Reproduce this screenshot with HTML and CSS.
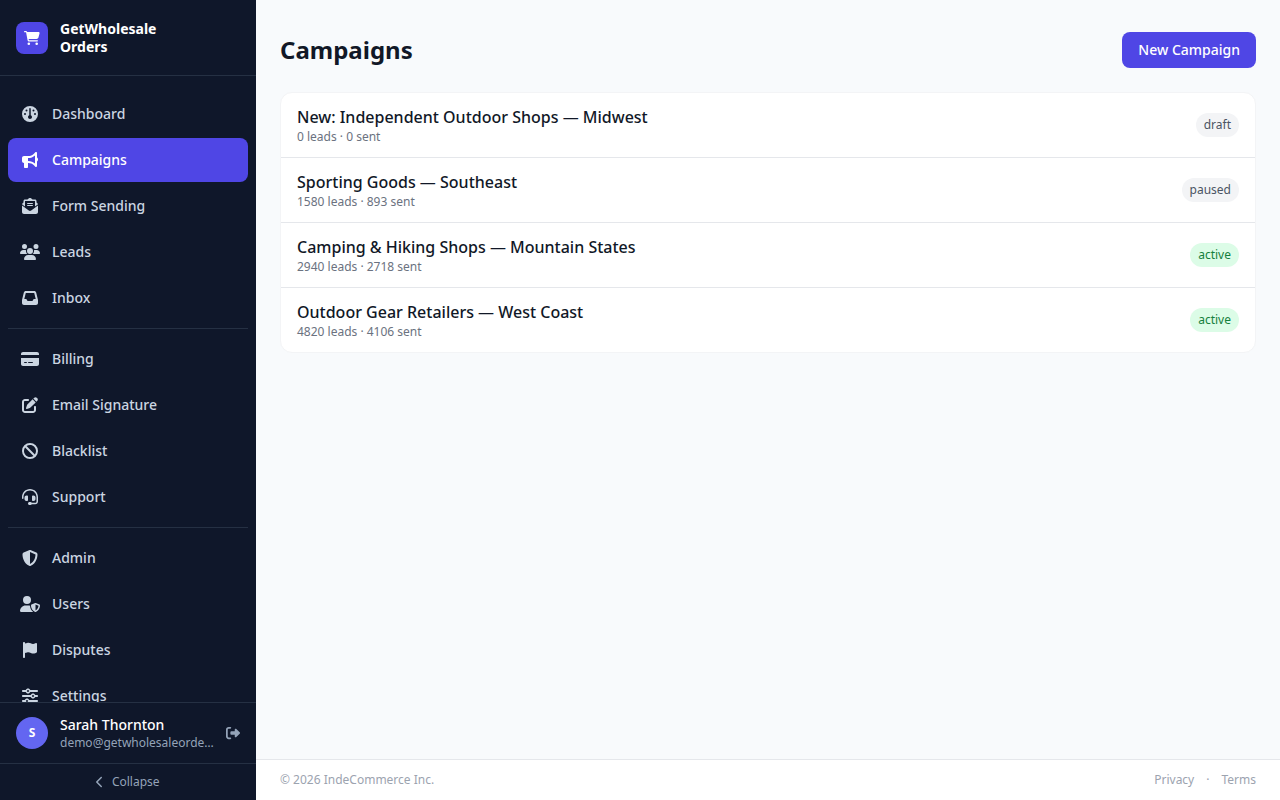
FILE: index.html
```html
<!DOCTYPE html>
<html lang="en">
<head>
<meta charset="utf-8">
<title>Campaigns</title>
<link rel="stylesheet" href="styles.css">
</head>
<body>
<div class="app">
  <aside class="sidebar">
    <div class="brand">
      <div class="brand-logo"><svg class="icon icon-sm" viewBox="0 0 576 512"><path d="M0 24C0 10.7 10.7 0 24 0H69.5c22 0 41.5 12.8 50.6 32h411c26.3 0 45.5 25 38.6 50.4l-41 152.3c-8.5 31.4-37 53.3-69.5 53.3H170.7l5.4 28.5c2.2 11.3 12.1 19.5 23.6 19.5H488c13.3 0 24 10.7 24 24s-10.7 24-24 24H199.7c-34.6 0-64.3-24.6-70.7-58.5L77.4 54.5c-.7-3.8-4-6.5-7.9-6.5H24C10.7 48 0 37.3 0 24zM128 464a48 48 0 1 1 96 0 48 48 0 1 1 -96 0zm336-48a48 48 0 1 1 0 96 48 48 0 1 1 0-96z"/></svg></div>
      <div class="brand-name">GetWholesale<br>Orders</div>
    </div>
    <nav class="nav">
      <div class="nav-group">
        <a class="nav-item"><span class="nav-icon"><svg class="icon" viewBox="0 0 512 512"><path d="M0 256a256 256 0 1 1 512 0A256 256 0 1 1 0 256zm320 96c0-26.9-16.5-49.9-40-59.3V88c0-13.3-10.7-24-24-24s-24 10.7-24 24V292.7c-23.5 9.5-40 32.5-40 59.3c0 35.3 28.7 64 64 64s64-28.7 64-64zM144 176a32 32 0 1 0 0-64 32 32 0 1 0 0 64zm-16 80a32 32 0 1 0 -64 0 32 32 0 1 0 64 0zm288 32a32 32 0 1 0 0-64 32 32 0 1 0 0 64zM400 144a32 32 0 1 0 -64 0 32 32 0 1 0 64 0z"/></svg></span>Dashboard</a>
        <a class="nav-item active"><span class="nav-icon"><svg class="icon" viewBox="0 0 512 512"><path d="M480 32c0-12.9-7.8-24.6-19.8-29.6s-25.7-2.2-34.9 6.9L381.7 53c-48 48-113.1 75-181 75H192 160 64c-35.3 0-64 28.7-64 64v96c0 35.3 28.7 64 64 64l0 128c0 17.7 14.3 32 32 32h64c17.7 0 32-14.3 32-32V352l8.7 0c67.9 0 133 27 181 75l43.6 43.6c9.2 9.2 22.9 11.9 34.9 6.9s19.8-16.6 19.8-29.6V300.4c18.6-8.8 32-32.5 32-60.4s-13.4-51.6-32-60.4V32zm-64 76.7V240 371.3C357.2 317.8 280.5 288 200.7 288H192V192h8.7c79.8 0 156.5-29.8 215.3-83.3z"/></svg></span>Campaigns</a>
        <a class="nav-item"><span class="nav-icon"><svg class="icon" viewBox="0 0 512 512"><path d="M215.4 96H144 107.8 96v8.8V144v40.4 89L.2 202.5c1.6-18.1 10.9-34.9 25.7-45.8L48 140.3V96c0-26.5 21.5-48 48-48h76.6l49.9-36.9C232.2 3.9 243.9 0 256 0s23.8 3.9 33.5 11L339.4 48H416c26.5 0 48 21.5 48 48v44.3l22.1 16.4c14.8 10.9 24.1 27.7 25.7 45.8L416 273.4v-89V144 104.8 96H404.2 368 296.6 215.4zM0 448V242.1L217.6 403.3c11.1 8.2 24.6 12.7 38.4 12.7s27.3-4.4 38.4-12.7L512 242.1V448v0c0 35.3-28.7 64-64 64H64c-35.3 0-64-28.7-64-64v0zM176 160H336c8.8 0 16 7.2 16 16s-7.2 16-16 16H176c-8.8 0-16-7.2-16-16s7.2-16 16-16zm0 64H336c8.8 0 16 7.2 16 16s-7.2 16-16 16H176c-8.8 0-16-7.2-16-16s7.2-16 16-16z"/></svg></span>Form Sending</a>
        <a class="nav-item"><span class="nav-icon"><svg class="icon" viewBox="0 0 640 512"><path d="M144 0a80 80 0 1 1 0 160A80 80 0 1 1 144 0zM512 0a80 80 0 1 1 0 160A80 80 0 1 1 512 0zM0 298.7C0 239.8 47.8 192 106.7 192h42.7c15.9 0 31 3.5 44.6 9.7c-1.3 7.2-1.9 14.7-1.9 22.3c0 38.2 16.8 72.5 43.3 96c-.2 0-.4 0-.7 0H21.3C9.6 320 0 310.4 0 298.7zM405.3 320c-.2 0-.4 0-.7 0c26.6-23.5 43.3-57.8 43.3-96c0-7.6-.7-15-1.9-22.3c13.6-6.3 28.7-9.7 44.6-9.7h42.7C592.2 192 640 239.8 640 298.7c0 11.8-9.6 21.3-21.3 21.3H405.3zM224 224a96 96 0 1 1 192 0 96 96 0 1 1 -192 0zM128 485.3C128 411.7 187.7 352 261.3 352H378.7C452.3 352 512 411.7 512 485.3c0 14.7-11.9 26.7-26.7 26.7H154.7c-14.7 0-26.7-11.9-26.7-26.7z"/></svg></span>Leads</a>
        <a class="nav-item"><span class="nav-icon"><svg class="icon" viewBox="0 0 512 512"><path d="M121 32C91.6 32 66 52 58.9 80.5L1.9 308.4C.6 313.5 0 318.7 0 323.9V416c0 35.3 28.7 64 64 64H448c35.3 0 64-28.7 64-64V323.9c0-5.2-.6-10.4-1.9-15.5l-57-227.9C446 52 420.4 32 391 32H121zm0 64H391l48 192H387.8c-12.1 0-23.2 6.8-28.6 17.7l-14.3 28.6c-5.4 10.8-16.5 17.7-28.6 17.7H195.8c-12.1 0-23.2-6.8-28.6-17.7l-14.3-28.6c-5.4-10.8-16.5-17.7-28.6-17.7H73L121 96z"/></svg></span>Inbox</a>
      </div>
      <div class="nav-group">
        <a class="nav-item"><span class="nav-icon"><svg class="icon" viewBox="0 0 576 512"><path d="M64 32C28.7 32 0 60.7 0 96v32H576V96c0-35.3-28.7-64-64-64H64zM576 224H0V416c0 35.3 28.7 64 64 64H512c35.3 0 64-28.7 64-64V224zM112 352h64c8.8 0 16 7.2 16 16s-7.2 16-16 16H112c-8.8 0-16-7.2-16-16s7.2-16 16-16zm112 16c0-8.8 7.2-16 16-16H368c8.8 0 16 7.2 16 16s-7.2 16-16 16H240c-8.8 0-16-7.2-16-16z"/></svg></span>Billing</a>
        <a class="nav-item"><span class="nav-icon"><svg class="icon" viewBox="0 0 512 512"><path d="M471.6 21.7c-21.9-21.9-57.3-21.9-79.2 0L362.3 51.7l97.9 97.9 30.1-30.1c21.9-21.9 21.9-57.3 0-79.2L471.6 21.7zm-299.2 220c-6.1 6.1-10.8 13.6-13.5 21.9l-29.6 88.8c-2.9 8.6-.6 18.1 5.8 24.6s15.9 8.7 24.6 5.8l88.8-29.6c8.2-2.7 15.7-7.4 21.9-13.5L437.7 172.3 339.7 74.3 172.4 241.7zM96 64C43 64 0 107 0 160V416c0 53 43 96 96 96H352c53 0 96-43 96-96V320c0-17.7-14.3-32-32-32s-32 14.3-32 32v96c0 17.7-14.3 32-32 32H96c-17.7 0-32-14.3-32-32V160c0-17.7 14.3-32 32-32h96c17.7 0 32-14.3 32-32s-14.3-32-32-32H96z"/></svg></span>Email Signature</a>
        <a class="nav-item"><span class="nav-icon"><svg class="icon" viewBox="0 0 512 512"><path d="M367.2 412.5L99.5 144.8C77.1 176.1 64 214.5 64 256c0 106 86 192 192 192c41.5 0 79.9-13.1 111.2-35.5zm45.3-45.3C434.9 335.9 448 297.5 448 256c0-106-86-192-192-192c-41.5 0-79.9 13.1-111.2 35.5L412.5 367.2zM0 256a256 256 0 1 1 512 0A256 256 0 1 1 0 256z"/></svg></span>Blacklist</a>
        <a class="nav-item"><span class="nav-icon"><svg class="icon" viewBox="0 0 512 512"><path d="M256 48C141.1 48 48 141.1 48 256v40c0 13.3-10.7 24-24 24s-24-10.7-24-24V256C0 114.6 114.6 0 256 0S512 114.6 512 256V400.1c0 48.6-39.4 88-88.1 88L313.6 488c-8.3 14.3-23.8 24-41.6 24H240c-26.5 0-48-21.5-48-48s21.5-48 48-48h32c17.8 0 33.3 9.7 41.6 24l110.4 .1c22.1 0 40-17.9 40-40V256c0-114.9-93.1-208-208-208zM144 208h16c17.7 0 32 14.3 32 32V352c0 17.7-14.3 32-32 32H144c-35.3 0-64-28.7-64-64V272c0-35.3 28.7-64 64-64zm224 0c35.3 0 64 28.7 64 64v48c0 35.3-28.7 64-64 64H352c-17.7 0-32-14.3-32-32V240c0-17.7 14.3-32 32-32h16z"/></svg></span>Support</a>
      </div>
      <div class="nav-group">
        <a class="nav-item"><span class="nav-icon"><svg class="icon" viewBox="0 0 512 512"><path d="M256 0c4.6 0 9.2 1 13.4 2.9L457.7 82.8c22 9.3 38.4 31 38.3 57.2c-.5 99.2-41.3 280.7-213.6 363.2c-16.7 8-36.1 8-52.8 0C57.3 420.7 16.5 239.2 16 140c-.1-26.2 16.3-47.9 38.3-57.2L242.7 2.9C246.8 1 251.4 0 256 0zm0 66.8V444.8C394 378 431.1 230.1 432 141.4L256 66.8l0 0z"/></svg></span>Admin</a>
        <a class="nav-item"><span class="nav-icon"><svg class="icon" viewBox="0 0 640 512"><path d="M224 256A128 128 0 1 0 224 0a128 128 0 1 0 0 256zm-45.7 48C79.8 304 0 383.8 0 482.3C0 498.7 13.3 512 29.7 512H418.3c1.8 0 3.5-.2 5.3-.5c-76.3-55.1-99.8-141-103.1-200.2c-16.1-4.8-33.1-7.3-50.7-7.3H178.3zm308.8-78.3l-120 48C358 277.4 352 286.2 352 296c0 63.3 25.9 168.8 134.8 214.2c5.9 2.5 12.6 2.5 18.5 0C614.1 464.8 640 359.3 640 296c0-9.8-6-18.6-15.1-22.3l-120-48c-5.7-2.3-12.1-2.3-17.8 0zM591.4 312c-3.9 50.7-27.2 116.7-95.4 149.7V273.8L591.4 312z"/></svg></span>Users</a>
        <a class="nav-item"><span class="nav-icon"><svg class="icon" viewBox="0 0 448 512"><path d="M64 32C64 14.3 49.7 0 32 0S0 14.3 0 32V64 368 480c0 17.7 14.3 32 32 32s32-14.3 32-32V352l64.3-16.1c41.1-10.3 84.6-5.5 122.5 13.4c44.2 22.1 95.5 24.8 141.7 7.4l34.7-13c12.5-4.7 20.8-16.6 20.8-30V66.1c0-23-24.2-38-44.8-27.7l-9.6 4.8c-46.3 23.2-100.8 23.2-147.1 0c-35.1-17.6-75.4-22-113.5-12.5L64 48V32z"/></svg></span>Disputes</a>
        <a class="nav-item"><span class="nav-icon"><svg class="icon" viewBox="0 0 512 512"><path d="M0 416c0 17.7 14.3 32 32 32l54.7 0c12.3 28.3 40.5 48 73.3 48s61-19.7 73.3-48L480 448c17.7 0 32-14.3 32-32s-14.3-32-32-32l-246.7 0c-12.3-28.3-40.5-48-73.3-48s-61 19.7-73.3 48L32 384c-17.7 0-32 14.3-32 32zm128 0a32 32 0 1 1 64 0 32 32 0 1 1 -64 0zM320 256a32 32 0 1 1 64 0 32 32 0 1 1 -64 0zm32-80c-32.8 0-61 19.7-73.3 48L32 224c-17.7 0-32 14.3-32 32s14.3 32 32 32l246.7 0c12.3 28.3 40.5 48 73.3 48s61-19.7 73.3-48l54.7 0c17.7 0 32-14.3 32-32s-14.3-32-32-32l-54.7 0c-12.3-28.3-40.5-48-73.3-48zM192 128a32 32 0 1 1 0-64 32 32 0 1 1 0 64zm73.3-64C253 35.7 224.8 16 192 16s-61 19.7-73.3 48L32 64C14.3 64 0 78.3 0 96s14.3 32 32 32l86.7 0c12.3 28.3 40.5 48 73.3 48s61-19.7 73.3-48L480 128c17.7 0 32-14.3 32-32s-14.3-32-32-32L265.3 64z"/></svg></span>Settings</a>
      </div>
    </nav>
    <div class="account">
      <div class="avatar">S</div>
      <div class="account-text">
        <div class="account-name">Sarah Thornton</div>
        <div class="account-email">demo@getwholesaleorders.com</div>
      </div>
      <svg class="icon icon-sm" viewBox="0 0 512 512"><path d="M377.9 105.9L500.7 228.7c7.2 7.2 11.3 17.1 11.3 27.3s-4.1 20.1-11.3 27.3L377.9 406.1c-6.4 6.4-15 9.9-24 9.9c-18.7 0-33.9-15.2-33.9-33.9l0-62.1-128 0c-17.7 0-32-14.3-32-32l0-64c0-17.7 14.3-32 32-32l128 0 0-62.1c0-18.7 15.2-33.9 33.9-33.9c9 0 17.6 3.6 24 9.9zM160 96L96 96c-17.7 0-32 14.3-32 32l0 256c0 17.7 14.3 32 32 32l64 0c17.7 0 32 14.3 32 32s-14.3 32-32 32l-64 0c-53 0-96-43-96-96L0 128C0 75 43 32 96 32l64 0c17.7 0 32 14.3 32 32s-14.3 32-32 32z"/></svg>
    </div>
    <div class="collapse"><svg class="icon icon-xs" viewBox="0 0 320 512"><path d="M9.4 233.4c-12.5 12.5-12.5 32.8 0 45.3l192 192c12.5 12.5 32.8 12.5 45.3 0s12.5-32.8 0-45.3L77.3 256 246.6 86.6c12.5-12.5 12.5-32.8 0-45.3s-32.8-12.5-45.3 0l-192 192z"/></svg><span>Collapse</span></div>
  </aside>
  <div class="page">
    <main class="main">
      <header class="page-header">
        <h1 class="page-title">Campaigns</h1>
        <a class="button">New Campaign</a>
      </header>
      <div class="card">
        <div class="row"><div><div class="row-title">New: Independent Outdoor Shops — Midwest</div><div class="row-meta">0 leads · 0 sent</div></div><span class="pill">draft</span></div>
        <div class="row"><div><div class="row-title">Sporting Goods — Southeast</div><div class="row-meta">1580 leads · 893 sent</div></div><span class="pill">paused</span></div>
        <div class="row"><div><div class="row-title">Camping &amp; Hiking Shops — Mountain States</div><div class="row-meta">2940 leads · 2718 sent</div></div><span class="pill pill-active">active</span></div>
        <div class="row"><div><div class="row-title">Outdoor Gear Retailers — West Coast</div><div class="row-meta">4820 leads · 4106 sent</div></div><span class="pill pill-active">active</span></div>
      </div>
    </main>
    <footer class="footer">
      <span>© 2026 IndeCommerce Inc.</span>
      <div class="footer-links"><a>Privacy</a><span class="footer-dot">·</span><a>Terms</a></div>
    </footer>
  </div>
</div>
</body>
</html>
```

FILE: styles.css
```css
* {
  box-sizing: border-box;
}

body {
  margin: 0;
  font-family: "Noto Sans", sans-serif;
  font-size: 16px;
  line-height: 24px;
  color: #111827;
  background: #f8fafc;
}

.app {
  display: flex;
  height: 100vh;
  overflow: hidden;
}

.icon {
  display: block;
  flex: none;
  height: 16px;
  fill: currentColor;
}

.icon-sm {
  height: 14px;
}

.icon-xs {
  height: 12px;
}

/* Sidebar */
.sidebar {
  display: flex;
  flex-direction: column;
  flex: none;
  width: 256px;
  background: #0f172a;
  color: #cbd5e1;
}

.brand {
  display: flex;
  align-items: center;
  gap: 12px;
  flex: none;
  padding: 20px 16px;
  border-bottom: 1px solid rgba(51, 65, 85, 0.6);
}

.brand-logo {
  display: flex;
  align-items: center;
  justify-content: center;
  width: 32px;
  height: 32px;
  border-radius: 8px;
  background: #4f46e5;
  color: #fff;
}

.brand-name {
  font-size: 14px;
  font-weight: 700;
  line-height: 17.5px;
  color: #fff;
}

.nav {
  flex: 1;
  min-height: 0;
  padding: 16px 8px;
  overflow: hidden;
}

.nav-group {
  display: flex;
  flex-direction: column;
  gap: 2px;
}

.nav-group + .nav-group {
  margin-top: 8px;
  padding-top: 8px;
  border-top: 1px solid rgba(51, 65, 85, 0.6);
}

.nav-item {
  display: flex;
  align-items: center;
  gap: 12px;
  flex: none;
  padding: 12px;
  border-radius: 8px;
  font-size: 14px;
  font-weight: 500;
  line-height: 20px;
}

.nav-item.active {
  background: #4f46e5;
  color: #fff;
}

.nav-icon {
  display: flex;
  justify-content: center;
  width: 20px;
}

.account {
  display: flex;
  align-items: center;
  gap: 12px;
  flex: none;
  padding: 12px 16px;
  border-top: 1px solid rgba(51, 65, 85, 0.6);
  color: #94a3b8;
}

.avatar {
  display: flex;
  align-items: center;
  justify-content: center;
  flex: none;
  width: 32px;
  height: 32px;
  border-radius: 50%;
  background: #6366f1;
  color: #fff;
  font-size: 12px;
  font-weight: 700;
  line-height: 16px;
}

.account-text {
  flex: 1;
  min-width: 0;
}

.account-name {
  font-size: 14px;
  font-weight: 500;
  line-height: 20px;
  color: #fff;
}

.account-email {
  overflow: hidden;
  font-size: 12px;
  line-height: 16px;
  text-overflow: ellipsis;
  white-space: nowrap;
}

.collapse {
  display: flex;
  align-items: center;
  justify-content: center;
  gap: 8px;
  flex: none;
  padding: 10px 16px;
  border-top: 1px solid rgba(51, 65, 85, 0.6);
  font-size: 12px;
  line-height: 16px;
  color: #94a3b8;
}

/* Page */
.page {
  display: flex;
  flex-direction: column;
  flex: 1;
  min-width: 0;
}

.main {
  flex: 1;
  padding: 32px 24px;
}

.page-header {
  display: flex;
  align-items: center;
  justify-content: space-between;
  margin-bottom: 24px;
}

.page-title {
  margin: 0;
  font-size: 24px;
  font-weight: 700;
  line-height: 32px;
}

.button {
  padding: 8px 16px;
  border-radius: 8px;
  background: #4f46e5;
  color: #fff;
  font-size: 14px;
  font-weight: 500;
  line-height: 20px;
}

.card {
  border: 1px solid #f3f4f6;
  border-radius: 12px;
  background: #fff;
}

.row {
  display: flex;
  align-items: center;
  justify-content: space-between;
  padding: 12px 16px;
}

.row + .row {
  border-top: 1px solid #e5e7eb;
}

.row-title {
  font-weight: 500;
}

.row-meta {
  font-size: 12px;
  line-height: 16px;
  color: #6b7280;
}

.pill {
  padding: 4px 8px;
  border-radius: 12px;
  background: #f3f4f6;
  color: #4b5563;
  font-size: 12px;
  line-height: 16px;
}

.pill-active {
  background: #dcfce7;
  color: #15803d;
}

.footer {
  display: flex;
  align-items: center;
  justify-content: space-between;
  flex: none;
  padding: 12px 24px;
  border-top: 1px solid #e5e7eb;
  background: #fff;
  color: #9ca3af;
  font-size: 12px;
  line-height: 16px;
}

.footer-links {
  display: flex;
  gap: 12px;
}
```
